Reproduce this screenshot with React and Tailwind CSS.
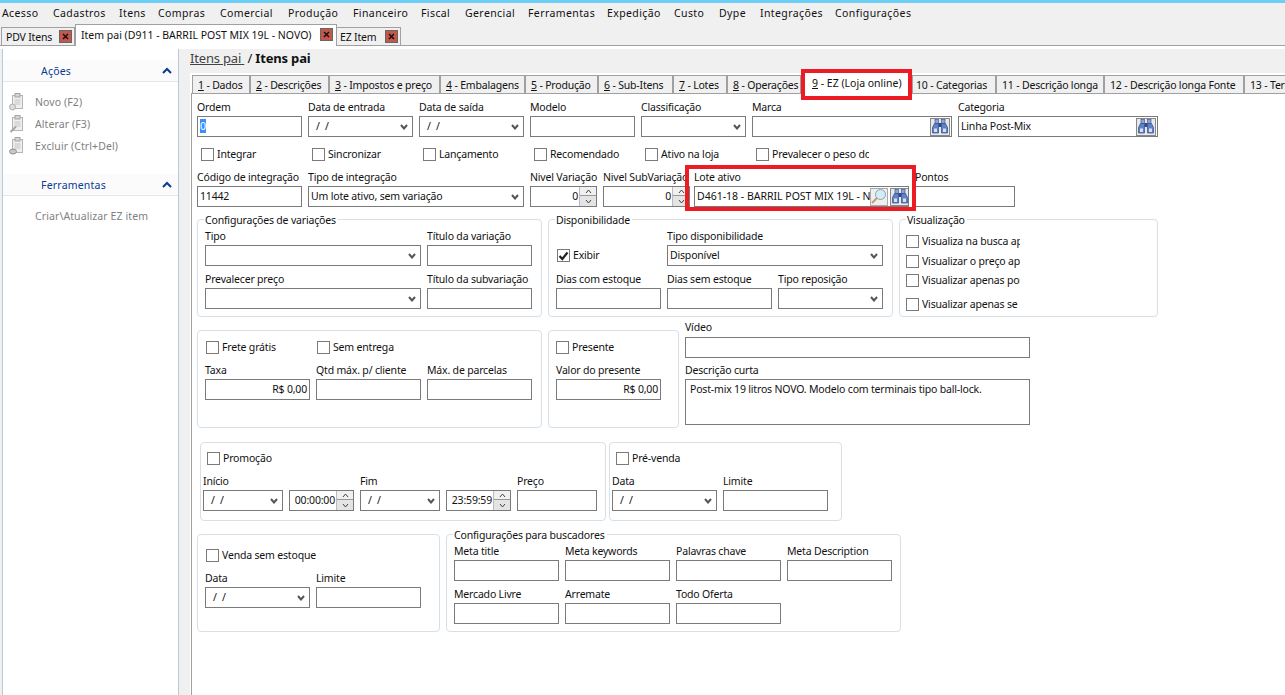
const menus = [["Acesso","w-[51px]"],["Cadastros","w-[66px]"],["Itens","w-[39px]"],["Compras","w-[62px]"],["Comercial","w-[68px]"],["Produção","w-[65px]"],["Financeiro","w-[68px]"],["Fiscal","w-[44px]"],["Gerencial","w-[63px]"],["Ferramentas","w-[79px]"],["Expedição","w-[67px]"],["Custo","w-[45px]"],["Dype","w-[41px]"],["Integrações","w-[75px]"],["Configurações","w-[90px]"]];
const tabs = [["1"," - Dados","w-[58px]"],["2"," - Descrições","w-[79px]"],["3"," - Impostos e preço","w-[111px]"],["4"," - Embalagens","w-[85px]"],["5"," - Produção","w-[73px]"],["6"," - Sub-Itens","w-[75px]"],["7"," - Lotes","w-[54px]"],["8"," - Operações","w-[74px]"]];
const tabs2 = [["10 - Categorias","w-[84px]","pl-[3px]"],["11 - Descrição longa","w-[108px]","pl-[5px]"],["12 - Descrição longa Fonte","w-[140px]","pl-[5px]"],["13 - Termos","w-[60px]","pl-[5px]"]];
const DATE = "  /  /";

function Close() {
  return (
    <span className="flex h-[13px] w-[13px] shrink-0 items-center justify-center border border-[#666] bg-[#c4564a]">
      <svg width="7" height="7" viewBox="0 0 7 7"><path d="M1 1 L6 6 M6 1 L1 6" stroke="#111" strokeWidth="1.5" /></svg>
    </span>
  );
}
function Box({ w, h = "h-[21px]", right, className = "", children }) {
  return (
    <div className={`${w} ${h} ${right ? "justify-end" : ""} ${className} flex shrink-0 items-center overflow-hidden border border-[#7a7a7a] bg-white px-[2px] pb-[2px] whitespace-pre`}>
      {children}
    </div>
  );
}
function Chevron() {
  return (
    <svg className="absolute right-[4px] top-[7px]" width="8" height="6" viewBox="0 0 8 6">
      <path d="M1 1 L4 4.5 L7 1" fill="none" stroke="#555" strokeWidth="2" />
    </svg>
  );
}
function Select({ w, children }) {
  return (
    <div className={`${w} relative flex h-[21px] shrink-0 items-center border border-[#7a7a7a] bg-white px-[2px] pb-[2px] whitespace-pre`}>
      {children}
      <Chevron />
    </div>
  );
}
function Field({ label, w, className = "", children }) {
  return (
    <div className={`${w} ${className} flex shrink-0 flex-col`}>
      <div className="h-[16px] overflow-visible whitespace-nowrap leading-[14px]">{label}</div>
      {children}
    </div>
  );
}
function TextF({ label, w = "w-[105px]", value, right }) {
  return (
    <Field label={label} w={w}>
      <Box w={w} right={right}>{value}</Box>
    </Field>
  );
}
function SelF({ label, w = "w-[105px]", value }) {
  return (
    <Field label={label} w={w}>
      <Select w={w}>{value}</Select>
    </Field>
  );
}
function Check({ label, w, checked, className = "", clip }) {
  return (
    <div className={`${w} ${className} flex h-[13px] shrink-0 items-center gap-[3px] whitespace-nowrap`}>
      <span className="flex h-[13px] w-[13px] shrink-0 items-center justify-center border border-[#7a7a7a] bg-white">
        {checked && (
          <svg width="11" height="10" viewBox="0 0 11 10"><path d="M1.5 5 L4.3 8 L9.5 1.5" fill="none" stroke="#222" strokeWidth="2.2" /></svg>
        )}
      </span>
      <span className={`${clip ? `${clip} overflow-hidden` : ""} -mt-[2px]`}>{label}</span>
    </div>
  );
}
function Group({ title, w, h = "h-[98px]", className = "", children }) {
  return (
    <div className={`${w} ${h} ${className} relative shrink-0 rounded-[4px] border border-[#d6e0e8] bg-white`}>
      {title && (
        <span className="absolute -top-[7px] left-[6px] bg-white pl-px pr-[2px] leading-[14px] whitespace-nowrap">{title}</span>
      )}
      {children}
    </div>
  );
}
function Spin({ w, value, label, clip }) {
  return (
    <Field label={label} w={w} className={clip ? "overflow-hidden" : ""}>
      <div className={`${w} relative flex h-[21px] items-center justify-end border border-[#7a7a7a] bg-white pb-[2px] pr-[18px]`}>
        {value}
        <span className="absolute right-0 top-0 flex h-[19px] w-[17px] flex-col border-l border-[#bbb]">
          <span className="flex h-[9px] items-center justify-center border-b border-[#999] bg-[#f0f0f0]">
            <svg width="7" height="5" viewBox="0 0 7 5"><path d="M1 4 L3.5 1 L6 4" fill="none" stroke="#444" /></svg>
          </span>
          <span className="flex flex-1 items-center justify-center bg-[#e4e4e4]">
            <svg width="7" height="5" viewBox="0 0 7 5"><path d="M1 1 L3.5 4 L6 1" fill="none" stroke="#444" /></svg>
          </span>
        </span>
      </div>
    </Field>
  );
}
function TimeF({ value }) {
  return <Spin label="" w="w-[65px]" value={value} />;
}
function Binoculars() {
  return (
    <span className="flex h-[18px] w-[20px] shrink-0 items-center justify-center border border-[#888] bg-[#e8e8e8]">
      <svg width="16" height="15" viewBox="0 0 16 15">
        <rect x="3" y="0.5" width="3.5" height="4" fill="#8ba6d8" stroke="#2f4a8c" strokeWidth="0.6" />
        <rect x="9.5" y="0.5" width="3.5" height="4" fill="#8ba6d8" stroke="#2f4a8c" strokeWidth="0.6" />
        <rect x="6.5" y="4" width="3" height="4" fill="#2f4a8c" />
        <path d="M2.5 4.5 H6.5 V14 H0.5 V8.5 Z" fill="#5f82c4" stroke="#2f4a8c" strokeWidth="0.7" />
        <path d="M9.5 4.5 H13.5 L15.5 8.5 V14 H9.5 Z" fill="#5f82c4" stroke="#2f4a8c" strokeWidth="0.7" />
        <rect x="2" y="9.5" width="3" height="3.5" fill="#d5e0f3" />
        <rect x="11" y="9.5" width="3" height="3.5" fill="#d5e0f3" />
      </svg>
    </span>
  );
}
function Magnifier() {
  return (
    <span className="flex h-[18px] w-[18px] shrink-0 items-center justify-center border border-[#aaa] bg-[#eeeeee]">
      <svg width="16" height="15" viewBox="0 0 16 15">
        <path d="M1 14 L6 9" stroke="#c79a73" strokeWidth="2" />
        <circle cx="9.5" cy="5.5" r="5" fill="#d4ecf7" stroke="#8aa3b8" />
      </svg>
    </span>
  );
}
function ClipIcon({ mark }) {
  return (
    <svg className="shrink-0" width="16" height="18" viewBox="0 0 16 18">
      <rect x="3.5" y="2.5" width="10" height="13" fill="#efefef" stroke="#b5b5b5" />
      <rect x="6" y="0.5" width="5" height="3.5" fill="#d5d5d5" stroke="#a5a5a5" />
      <path d="M5.5 7 H11.5 M5.5 9 H11.5 M5.5 11 H11.5" stroke="#c4c4c4" />
      {mark === "plus" && <circle cx="3.5" cy="14" r="3" fill="#dcdcdc" stroke="#b0b0b0" />}
      {mark === "edit" && <path d="M1.5 17 L7 11.5" stroke="#a5a5a5" strokeWidth="2" />}
      {mark === "minus" && <ellipse cx="4" cy="14.5" rx="3.5" ry="2.5" fill="#c8c8c8" stroke="#909090" />}
    </svg>
  );
}
function SideHeader({ title }) {
  return (
    <div className="flex h-[22px] items-center justify-between border-b border-[#e4e8ec] bg-[#fbfbfb] pl-[38px] pr-[6px] text-[#0a3a96]">
      <span className="tracking-[0.2px]">{title}</span>
      <svg width="10" height="7" viewBox="0 0 10 7"><path d="M1 6 L5 2 L9 6" fill="none" stroke="#0a3a96" strokeWidth="2" /></svg>
    </div>
  );
}
function SideItem({ mark, children }) {
  return (
    <div className="flex h-[22px] items-center gap-[10px] pl-[6px] text-[#7f7f7f]">
      <ClipIcon mark={mark} />
      <span className="tracking-[0.1px]">{children}</span>
    </div>
  );
}

export default function App() {
  return (
    <div className="flex h-[695px] w-[1285px] flex-col overflow-hidden bg-white font-['Noto_Sans',sans-serif] text-[10.5px] leading-[14px] tracking-[-0.18px] text-[#111]">
      <div className="h-[3px] shrink-0 bg-[#6dcff6]" />
      <div className="flex h-[22px] shrink-0 items-center bg-[#f0f0f0] pb-[2px] pl-[2px]">
        {menus.map(([m, w]) => (
          <span key={m} className={`${w} shrink-0 whitespace-nowrap tracking-[0.4px]`}>{m}</span>
        ))}
      </div>
      <div className="flex h-[21px] shrink-0 items-end border-b border-[#a0a0a0] bg-[#f0f0f0] pl-px">
        <div className="flex h-[18px] w-[74px] items-center justify-between border border-b-0 border-[#a0a0a0] pl-[4px] pr-[2px]">
          <span>PDV Itens</span><Close />
        </div>
        <div className="relative -mb-px flex h-[22px] w-[262px] items-start justify-between border border-b-0 border-[#a0a0a0] bg-white pl-[5px] pr-[3px] pt-[3px] whitespace-nowrap">
          <span className="tracking-normal">Item pai (D911 - BARRIL POST MIX 19L - NOVO)</span><Close />
        </div>
        <div className="flex h-[18px] w-[64px] items-center justify-between border border-b-0 border-l-0 border-[#a0a0a0] pl-[3px] pr-[2px]">
          <span>EZ Item</span><Close />
        </div>
      </div>
      <div className="h-[3px] shrink-0 bg-white" />
      <div className="flex min-h-0 flex-1 bg-[#f0f0f0]">
        <div className="ml-[2px] w-[177px] shrink-0 border-x border-[#b9c9d8] bg-white pt-[11px]">
          <SideHeader title="Ações" />
          <div className="mt-[9px]">
            <SideItem mark="plus">Novo (F2)</SideItem>
            <SideItem mark="edit">Alterar (F3)</SideItem>
            <SideItem mark="minus">Excluir (Ctrl+Del)</SideItem>
          </div>
          <div className="mt-[17px]"><SideHeader title="Ferramentas" /></div>
          <div className="mt-[13px] pl-[32px] tracking-[0.1px] text-[#7f7f7f]">Criar\Atualizar EZ item</div>
        </div>
        <div className="ml-[11px] flex min-w-0 flex-1 flex-col">
          <div className="flex h-[24px] shrink-0 items-center whitespace-pre pb-[6px] text-[13px]">
            <span className="text-[#444] underline">Itens pai </span>
            <span> / </span>
            <span className="font-bold">Itens pai</span>
          </div>
          <div className="flex-1 bg-white pt-[2px]">
            <div className="relative z-10 flex h-[18px] pl-[2px]">
              {tabs.map(([n, t, w]) => (
                <div key={n} className={`${w} flex h-[18px] shrink-0 items-center border border-b-0 border-[#a0a0a0] bg-[#f0f0f0] pl-[5px] whitespace-pre`}>
                  <u>{n}</u>{t}
                </div>
              ))}
              <div className="relative flex h-[19px] w-[111px] shrink-0 items-start bg-white pl-[11px] pt-[1px] whitespace-pre tracking-normal">
                <span><u>9</u> - EZ (Loja online)</span>
                <div className="absolute -bottom-[6px] -top-[6px] inset-x-0 border-[4px] border-[#ed1c24]" />
              </div>
              {tabs2.map(([t, w, p]) => (
                <div key={t} className={`${w} ${p} flex h-[18px] shrink-0 items-center overflow-hidden border border-b-0 border-[#a0a0a0] bg-[#f0f0f0] whitespace-pre`}>{t}</div>
              ))}
            </div>
            <div className="ml-px h-[603px] border-l border-t border-[#a0a0a0] pl-[5px] pt-[6px]">
              <div className="flex gap-[6px]">
                <Field label="Ordem" w="w-[105px]">
                  <Box w="w-[105px]"><span className="bg-[#3390ff] text-white">0</span></Box>
                </Field>
                <SelF label="Data de entrada" value={DATE} />
                <SelF label="Data de saída" value={DATE} />
                <TextF label="Modelo" />
                <SelF label="Classificação" />
                <Field label="Marca" w="w-[200px]">
                  <Box w="w-[200px]" className="justify-end !pb-0 !pr-px"><Binoculars /></Box>
                </Field>
                <Field label="Categoria" w="w-[200px]">
                  <Box w="w-[200px]" className="justify-between !pb-0 !pr-px"><span className="-mt-[2px]">Linha Post-Mix</span><Binoculars /></Box>
                </Field>
              </div>
              <div className="mt-[11px] flex pl-[4px]">
                <Check label="Integrar" w="w-[111px]" />
                <Check label="Sincronizar" w="w-[111px]" />
                <Check label="Lançamento" w="w-[111px]" />
                <Check label="Recomendado" w="w-[111px]" />
                <Check label="Ativo na loja" w="w-[111px]" />
                <Check label="Prevalecer o peso do produto" w="w-[113px]" clip="w-[97px]" />
              </div>
              <div className="mt-[9px] flex gap-[6px]">
                <TextF label="Código de integração" value="11442" />
                <SelF label="Tipo de integração" w="w-[216px]" value="Um lote ativo, sem variação" />
                <Spin label="Nivel Variação" w="w-[67px]" value="0" />
                <Spin label="Nivel SubVariação" w="w-[87px]" value="0" clip />
                <div className="relative z-10 -ml-[2px] w-[215px] shrink-0">
                  <Field label="Lote ativo" w="w-[215px]">
                    <div className="flex h-[21px] items-center overflow-hidden border border-[#7a7a7a] bg-white pl-[2px] pr-px whitespace-nowrap">
                      <span className="-mt-[2px] w-[173px] shrink-0 overflow-hidden tracking-normal">D461-18 - BARRIL POST MIX 19L - NOVO</span>
                      <Magnifier />
                      <span className="w-[2px] shrink-0" />
                      <Binoculars />
                    </div>
                  </Field>
                  <div className="absolute -bottom-[4px] -left-[9px] -right-[7px] -top-[5px] border-[4px] border-[#ed1c24]" />
                </div>
                <div className="-ml-px pl-px"><TextF label="Pontos" w="w-[100px]" /></div>
              </div>

              <div className="mt-[12px] flex gap-[6px]">
                <Group title="Configurações de variações" w="w-[345px]" className="pl-[7px] pt-[9px]">
                  <div className="flex gap-[6px]">
                    <SelF label="Tipo" w="w-[216px]" />
                    <TextF label="Título da variação" />
                  </div>
                  <div className="mt-[6px] flex gap-[6px]">
                    <SelF label="Prevalecer preço" w="w-[216px]" />
                    <TextF label="Título da subvariação" />
                  </div>
                </Group>
                <Group title="Disponibilidade" w="w-[345px]" className="pl-[7px] pt-[9px]">
                  <div className="flex gap-[6px]">
                    <div className="w-[105px] pl-px pt-[20px]"><Check label="Exibir" checked /></div>
                    <SelF label="Tipo disponibilidade" w="w-[216px]" value="Disponível" />
                  </div>
                  <div className="mt-[6px] flex gap-[6px]">
                    <TextF label="Dias com estoque" />
                    <TextF label="Dias sem estoque" />
                    <SelF label="Tipo reposição" />
                  </div>
                </Group>
                <Group title="Visualização" w="w-[259px]" className="pl-[6px] pt-[15px]">
                  <Check label="Visualiza na busca após o login" clip="w-[98px]" />
                  <Check label="Visualizar o preço após o login" clip="w-[98px]" className="mt-[7px]" />
                  <Check label="Visualizar apenas por convite" clip="w-[98px]" className="mt-[6px]" />
                  <Check label="Visualizar apenas se logado" clip="w-[98px]" className="mt-[11px]" />
                </Group>
              </div>

              <div className="mt-[13px] flex gap-[6px]">
                <Group w="w-[345px]" className="pl-[7px] pt-[10px]">
                  <div className="flex pl-px">
                    <Check label="Frete grátis" w="w-[111px]" />
                    <Check label="Sem entrega" />
                  </div>
                  <div className="mt-[9px] flex gap-[6px]">
                    <TextF label="Taxa" value="R$ 0,00" right />
                    <TextF label="Qtd máx. p/ cliente" />
                    <TextF label="Máx. de parcelas" />
                  </div>
                </Group>
                <Group w="w-[131px]" className="pl-[7px] pt-[10px]">
                  <Check label="Presente" />
                  <div className="mt-[9px]"><TextF label="Valor do presente" value="R$ 0,00" right /></div>
                </Group>
                <div className="-mt-[9px] w-[345px] shrink-0">
                  <TextF label={<span className="relative -top-px">Vídeo</span>} w="w-[345px]" />
                  <div className="mt-[5px]">
                    <Field label="Descrição curta" w="w-[345px]">
                      <div className="h-[46px] border border-[#7a7a7a] bg-white px-[4px] pt-[2px]">Post-mix 19 litros NOVO. Modelo com terminais tipo ball-lock.</div>
                    </Field>
                  </div>
                </div>
              </div>

              <div className="ml-[3px] mt-[14px] flex gap-[3px]">
                <Group w="w-[406px]" h="h-[79px]" className="pl-[2px] pt-[9px]">
                  <div className="pl-[4px]"><Check label="Promoção" /></div>
                  <div className="mt-[9px] flex gap-[6px]">
                    <SelF label="Início" w="w-[80px]" value={DATE} />
                    <TimeF value="00:00:00" />
                    <SelF label="Fim" w="w-[80px]" value={DATE} />
                    <TimeF value="23:59:59" />
                    <TextF label="Preço" w="w-[80px]" />
                  </div>
                </Group>
                <Group w="w-[233px]" h="h-[79px]" className="pl-[2px] pt-[9px]">
                  <div className="pl-[4px]"><Check label="Pré-venda" /></div>
                  <div className="mt-[9px] flex gap-[6px]">
                    <SelF label="Data" value={DATE} />
                    <TextF label="Limite" />
                  </div>
                </Group>
              </div>

              <div className="mt-[13px] flex gap-[6px]">
                <Group w="w-[243px]" className="pl-[7px] pt-[14px]">
                  <div className="pl-px"><Check label="Venda sem estoque" /></div>
                  <div className="mt-[9px] flex gap-[6px]">
                    <SelF label="Data" value={DATE} />
                    <TextF label="Limite" />
                  </div>
                </Group>
                <Group title="Configurações para buscadores" w="w-[455px]" className="pl-[7px] pt-[9px]">
                  <div className="flex gap-[6px]">
                    <TextF label="Meta title" />
                    <TextF label="Meta keywords" />
                    <TextF label="Palavras chave" />
                    <TextF label="Meta Description" />
                  </div>
                  <div className="mt-[6px] flex gap-[6px]">
                    <TextF label="Mercado Livre" />
                    <TextF label="Arremate" />
                    <TextF label="Todo Oferta" />
                  </div>
                </Group>
              </div>
            </div>
          </div>
        </div>
      </div>
    </div>
  );
}
